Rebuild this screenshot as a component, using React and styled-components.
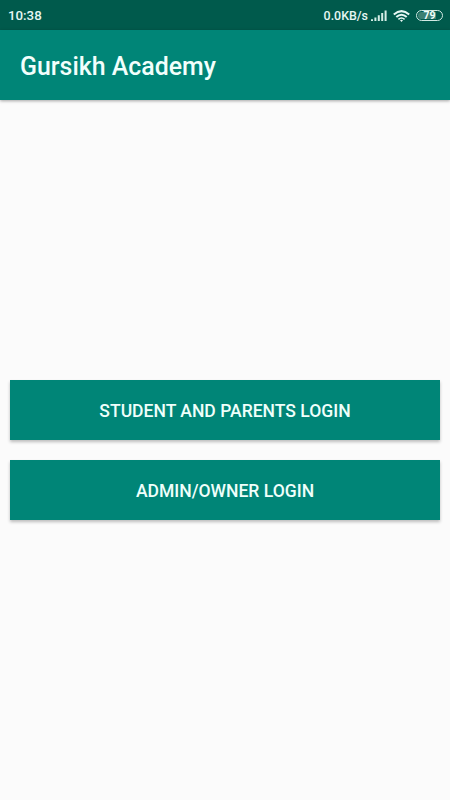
import React from "react";
import styled, { createGlobalStyle } from "styled-components";

const GlobalStyle = createGlobalStyle`
  body { margin: 0; background: #fbfbfb; font-family: Roboto, sans-serif; }
`;

const Screen = styled.div`
  display: flex;
  flex-direction: column;
  height: 800px;
  width: 450px;
  background: #fbfbfb;
  overflow: hidden;
`;

const StatusBar = styled.div`
  display: flex;
  align-items: center;
  justify-content: space-between;
  box-sizing: border-box;
  height: 30px;
  padding: 1px 7px 0 8px;
  background: #005a4c;
  color: #e6f7f3;
  font-size: 13.3px;
  font-weight: 500;
  line-height: 16px;
`;

const StatusIcons = styled.div`
  display: flex;
  align-items: center;
  svg { display: block; }
`;

const Speed = styled.span`
  font-size: 12.4px;
  margin-right: 3px;
`;

const SignalIcon = styled.svg`
  width: 16px;
  height: 11px;
  margin-right: 6px;
`;

const WifiIcon = styled.svg`
  width: 17px;
  height: 12px;
  margin-right: 6px;
`;

const Battery = styled.div`
  display: flex;
  box-sizing: border-box;
  width: 27px;
  height: 11px;
  padding: 1px;
  border: 1px solid #d2e9e3;
  border-radius: 6px;
`;

const BatteryLevel = styled.span`
  flex: 1;
  border-radius: 4px;
  background: linear-gradient(90deg, #3c8072 79%, transparent 79%);
  color: #f2fffc;
  font-size: 10.5px;
  font-weight: 700;
  line-height: 8px;
  text-align: center;
`;

const AppBar = styled.header`
  display: flex;
  align-items: center;
  height: 70px;
  padding: 0 20px;
  background: #008577;
  box-shadow: 0 1px 3px rgba(0, 0, 0, 0.35);
`;

const Title = styled.h1`
  margin: 0;
  padding-top: 3px;
  color: #f2fffc;
  font-size: 24.9px;
  font-weight: 500;
  line-height: 31px;
`;

const Actions = styled.main`
  flex: 1;
  display: flex;
  flex-direction: column;
  justify-content: center;
  gap: 20px;
  padding: 0 10px;
`;

const LoginButton = styled.button`
  height: 60px;
  padding: 2px 0 0;
  border: 0;
  background: #008577;
  color: #effffb;
  font: 500 17.55px/22px Roboto, sans-serif;
  box-shadow: 0 2px 3px rgba(0, 0, 0, 0.25);
`;

export default function App() {
  return (
    <Screen>
      <GlobalStyle />
      <StatusBar>
        <span>10:38</span>
        <StatusIcons>
          <Speed>0.0KB/s</Speed>
          <SignalIcon viewBox="0 0 16 11" stroke="#d5eee7" strokeWidth="2">
            <path d="M1 11V9.3M4.4 11V7.6M7.8 11V5.3M11.2 11V3M14.6 11V.5" />
          </SignalIcon>
          <WifiIcon viewBox="0 0 17 12" fill="none" stroke="#e6f7f3" strokeWidth="2">
            <path d="M.8 4.5Q8.5-2.3 16.2 4.5M3.3 7.1Q8.5 2.4 13.7 7.1" />
            <path d="M5.4 9.3Q8.5 6.7 11.6 9.3" strokeWidth="1.6" />
            <path d="M7 10.2Q8.5 9.1 10 10.2L8.5 12Z" fill="#e6f7f3" stroke="none" />
          </WifiIcon>
          <Battery>
            <BatteryLevel>79</BatteryLevel>
          </Battery>
        </StatusIcons>
      </StatusBar>
      <AppBar>
        <Title>Gursikh Academy</Title>
      </AppBar>
      <Actions>
        <LoginButton>STUDENT AND PARENTS LOGIN</LoginButton>
        <LoginButton>ADMIN/OWNER LOGIN</LoginButton>
      </Actions>
    </Screen>
  );
}
